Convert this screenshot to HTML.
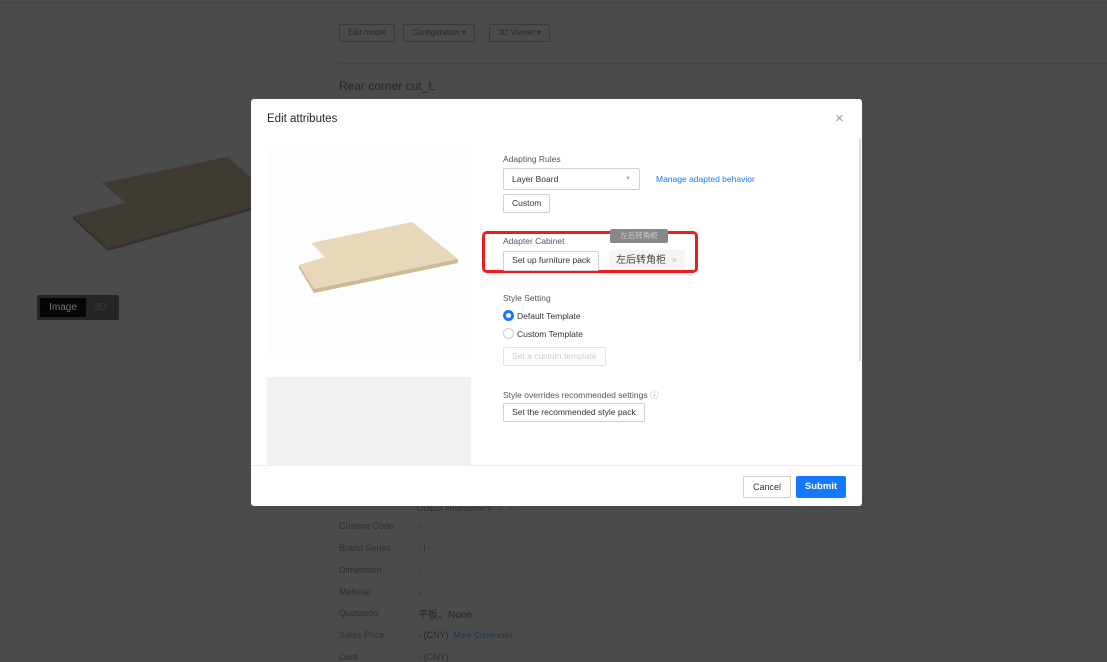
<!DOCTYPE html>
<html style="background:#4b4b4b"><head><meta charset="utf-8"><style>
*{box-sizing:border-box;margin:0;padding:0}
html,body{background:#4b4b4b}
body{width:1107px;height:658px;font-family:"Liberation Sans","Noto Sans CJK SC",sans-serif;position:relative;overflow:hidden;color:#333}
.a{position:absolute}
.bg{color:#2e2e2e;font-size:9px}
.bb{border:1px solid #3a3a3a;border-radius:2px;height:18px;font-size:8px;color:#2a2a2a;line-height:16px;padding:0 8px}
.modal{left:251px;top:99px;width:611px;height:407px;background:#fff;border-radius:3px}
.btn{border:1px solid #d0d0d0;border-radius:2px;background:#fff;font-size:8.5px;color:#333;height:19px;line-height:17px;padding:0 8px;position:absolute;white-space:nowrap}
.lbl{font-size:8.5px;color:#555;position:absolute}
</style></head><body>
<div class="a" style="left:0;top:0;width:1107px;height:658px;background:#4b4b4b"></div>
<div class="a" style="left:0;top:2px;width:1107px;height:1px;background:#444"></div>
<div class="a bb" style="left:339px;top:24px">Edit model</div>
<div class="a bb" style="left:403px;top:24px">Configuration ▾</div>
<div class="a bb" style="left:489px;top:24px">3D Viewer ▾</div>
<div class="a" style="left:337px;top:63px;width:770px;height:1px;background:#444"></div>
<div class="a" style="left:339px;top:79px;font-size:12px;color:#262626">Rear corner cut_L</div>
<div class="a" style="left:27px;top:59px;width:285px;height:286px;border:1px solid #474747"></div>
<svg class="a" style="left:0;top:0" width="260" height="260"><polygon points="102,183 227,157 260,185 260,205 108,248 73,216 126,203" fill="#3f3a32"/><polygon points="73,216 108,248 260,205 260,208 108,251 73,219" fill="#35312b"/></svg>
<div class="a" style="left:37px;top:295px;width:82px;height:25px;background:#252525;border-radius:2px"></div>
<div class="a" style="left:40px;top:298px;width:46px;height:19px;background:#050505;color:#777;font-size:10px;line-height:19px;text-align:center">Image</div>
<div class="a" style="left:94px;top:302px;color:#3a3a3a;font-size:10px">3D</div>
<div class="a" style="left:417px;top:502px;font-size:8.5px;color:#2e2e2e">Output environment ⓘ &nbsp; -</div>
<div class="a bg" style="left:339px;top:521px">Custom Code</div><div class="a bg" style="left:418px;top:521px">-</div>
<div class="a bg" style="left:339px;top:543px">Brand Series</div><div class="a bg" style="left:418px;top:543px">- | -</div>
<div class="a bg" style="left:339px;top:565px">Dimension</div><div class="a bg" style="left:418px;top:565px">-</div>
<div class="a bg" style="left:339px;top:587px">Material</div><div class="a bg" style="left:418px;top:587px">-</div>
<div class="a bg" style="left:339px;top:608px">Quotation</div><div class="a" style="left:418px;top:606px;font-size:10px;color:#262626">平板、None</div>
<div class="a bg" style="left:339px;top:630px">Sales Price</div><div class="a" style="left:418px;top:630px;font-size:9px;color:#262626">- (CNY) &nbsp;<span style="color:#16305a;font-size:8px">More Currencies</span></div>
<div class="a bg" style="left:339px;top:652px">Cost</div><div class="a bg" style="left:418px;top:652px">- (CNY)</div>

<div class="a modal">
 <div class="a" style="left:16px;top:14px;font-size:11.5px;color:#262626">Edit attributes</div>
 <div class="a" style="left:584px;top:11px;font-size:15px;color:#999">×</div>
 <div class="a" style="left:16px;top:52px;width:204px;height:208px;background:#fdfdfd"></div>
 <svg class="a" style="left:0;top:0" width="300" height="300"><polygon points="60,144 161,123 207,160 63,190 48,166 74,158" fill="#e6d8b8"/><polygon points="48,166 63,190 207,160 207,164 63,194 48,169" fill="#cbbb95"/></svg>
 <div class="a" style="left:16px;top:278px;width:204px;height:88px;background:#f2f2f2"></div>
 <div class="lbl" style="left:252px;top:55px">Adapting Rules</div>
 <div class="btn" style="left:252px;top:69px;width:137px;height:22px;line-height:20px">Layer Board<span style="float:right;color:#aaa;font-size:6px">▼</span></div>
 <div class="a" style="left:405px;top:75px;font-size:8.5px;color:#1677ff">Manage adapted behavior</div>
 <div class="btn" style="left:252px;top:95px">Custom</div>
 <div class="a" style="left:231px;top:132px;width:216px;height:42px;border:3px solid #ee1c1c;border-radius:5px"></div>
 <div class="lbl" style="left:252px;top:137px">Adapter Cabinet</div>
 <div class="a" style="left:359px;top:130px;width:58px;height:14px;background:#888;border-radius:2px;color:#ccc;font-size:7.5px;text-align:center;line-height:14px">左后转角柜</div>
 <div class="btn" style="left:252px;top:152px;height:20px">Set up furniture pack</div>
 <div class="a" style="left:358px;top:151px;width:76px;height:20px;background:#f5f5f5;font-size:10px;color:#444;line-height:20px;padding-left:7px">左后转角柜 <span style="color:#bbb;font-size:9px;margin-left:3px">×</span></div>
 <div class="lbl" style="left:252px;top:194px">Style Setting</div>
 <div class="a" style="left:252px;top:211px;width:11px;height:11px;border-radius:50%;border:3px solid #1677ff"></div>
 <div class="a" style="left:266px;top:212px;font-size:8.5px;color:#333">Default Template</div>
 <div class="a" style="left:252px;top:229px;width:11px;height:11px;border-radius:50%;border:1px solid #ccc"></div>
 <div class="a" style="left:266px;top:230px;font-size:8.5px;color:#333">Custom Template</div>
 <div class="btn" style="left:252px;top:248px;color:#ccc;border-color:#e2e2e2">Set a custom template</div>
 <div class="lbl" style="left:252px;top:290px">Style overrides recommended settings <span style="color:#999">ⓘ</span></div>
 <div class="btn" style="left:252px;top:304px">Set the recommended style pack</div>
 <div class="a" style="left:608px;top:40px;width:2px;height:222px;background:#ddd"></div>
 <div class="a" style="left:0;top:366px;width:611px;height:1px;background:#eee"></div>
 <div class="btn" style="left:492px;top:377px;height:22px;line-height:20px;padding:0 9px;font-size:9px">Cancel</div>
 <div class="a" style="left:545px;top:377px;width:50px;height:22px;background:#1677ff;color:#fff;border-radius:2px;font-size:9.5px;font-weight:bold;line-height:22px;text-align:center">Submit</div>
</div>
</body></html>
